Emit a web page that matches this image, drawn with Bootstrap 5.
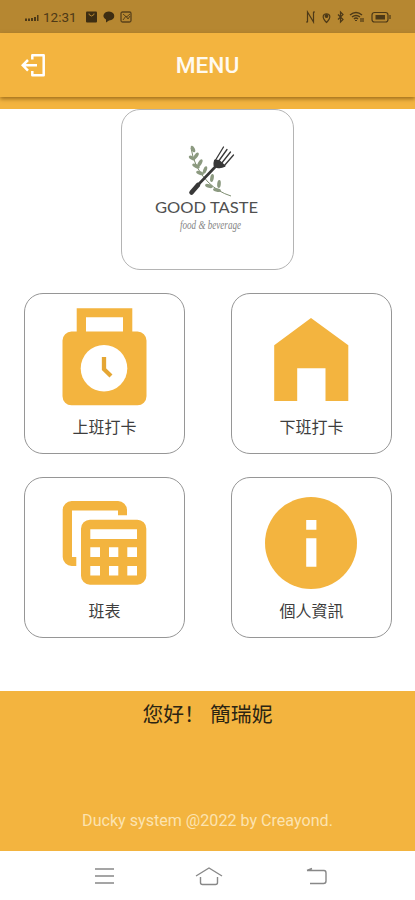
<!DOCTYPE html>
<html lang="zh-Hant">
<head>
<meta charset="utf-8">
<meta name="viewport" content="width=device-width, initial-scale=1">
<title>MENU</title>
<link href="https://cdn.jsdelivr.net/npm/bootstrap@5.3.0/dist/css/bootstrap.min.css" rel="stylesheet">
<style>
:root{--amber:#f3b43f}
body{font-family:Roboto,"Noto Sans CJK SC",sans-serif;height:900px;overflow:hidden;color:#333}
svg{display:block;flex:none}
.status-bar{height:33px;background:#b68731;color:#4d3917;padding:1px 22px 0 24px;font-size:13.5px}
.app-bar{height:64px;background:var(--amber);box-shadow:0 2px 4px rgba(90,55,0,.55);z-index:1}
.app-title{font-size:22.700px;font-weight:500;line-height:66px;color:#fffaf0}
.exit-btn{left:21px;top:20px}
.strip{height:12px;background:var(--amber)}
.tile{border:1px solid #969696;border-radius:19px;background:#fff}
.logo-tile{width:173px;height:161px;border-color:#b4b4b4}
.tiles{padding:0 23px 0 24px;margin-top:23px;row-gap:23px}
.menu-tile{width:161px;height:161px;padding-top:10px;color:#3d3d3d;font-size:16px}
.menu-tile span{line-height:24px;margin-top:2px}
.menu-tile svg{fill:var(--amber);margin-right:2px}
.greeting{height:160px;margin-top:53px;background:var(--amber);color:#2b2413;padding-top:8px}
.hello{font-size:20.8px;line-height:32px;white-space:pre}
.credit{font-size:16.1px;line-height:24px;color:#fce3b0;margin-bottom:18px}
.nav-keys{height:48px;padding:1px 87px 0 93px}
.nav-keys svg{fill:none;stroke:#888;stroke-width:1.4}
</style>
</head>
<body class="d-flex flex-column bg-white">
<div class="status-bar d-flex align-items-center justify-content-between flex-shrink-0">
  <div class="d-flex align-items-center">
    <svg width="15" height="10" viewBox="0 0 15 10" fill="currentColor"><path d="M1 6.500h2v2.500H1zM4 6.500h2v2.500H4zM7 6h2v3H7zM10 5h2v4h-2zM13 3h1.500v6H13z"/></svg>
    <span class="ms-1">12:31</span>
    <svg class="ms-2" width="48" height="12" viewBox="0 0 48 12"><rect x="1" y=".5" width="11" height="11" rx="1" fill="#3d2d12"/><path d="M4 2.5v1q2.500 3 5 0v-1" fill="none" stroke="#b68731"/><path d="M24 .5c7 0 7 9 0 9l-3 2v-3c-5-3-2-8 3-8" fill="#3d2d12"/><rect x="36" y="1" width="10" height="10" rx="1.500" fill="none" stroke="#59411a" stroke-width="1.300"/><path d="M38 3l3.500 3L45 3M38 9l3-4 2 3 2-3" fill="none" stroke="#59411a"/></svg>
  </div>
  <svg width="88" height="14" viewBox="0 0 88 14" fill="none" stroke="#4d3917" stroke-width="1.200"><path d="M2.500 12V2l6 10V2M1 12h2M8 2h2"/><path d="M21.500 12.500C10 .8 33 .8 21.500 12.500z"/><circle cx="21.500" cy="6" r="1.300" fill="#4d3917"/><path d="M33 4.500l5 5-2.500 2.500V2L38 4.500l-5 5"/><path d="M45 5q6-5 12 0M47 7q4-3 8 0M49 9q2-2 4 0" stroke-width="1.500"/><path d="M50 10.500h2M56 8v4M58 8v4"/><rect x="67" y="2.500" width="16" height="9.500" rx="2.500"/><path d="M85 5v4"/><path d="M70.500 5h9.500v4.500H70.500z" fill="#4d3917" stroke="none"/></svg>
</div>
<header class="app-bar position-relative text-center flex-shrink-0">
  <svg class="exit-btn position-absolute" width="25" height="25" viewBox="0 0 25 25" fill="none" stroke="#fff" stroke-width="2.500"><path d="M11.300 6.500V2.300H22.700V22.300H11.300V18" stroke-linejoin="round"/><path d="M16 12.300H2M7 7L1.700 12.300 7 17.600"/></svg>
  <div class="app-title">MENU</div>
</header>
<div class="strip flex-shrink-0"></div>
<main>
  <div class="tile logo-tile mx-auto">
    <svg width="171" height="159" viewBox="0 0 171 159">
      <path d="M69 38Q72 58 86 72Q96 82 109 86" fill="none" stroke="#7d8c70"/>
      <g fill="#8c9a80"><ellipse cx="71" cy="39" rx="1.800" ry="3.500" transform="rotate(-25 71 39)"/><ellipse cx="74" cy="46" rx="1.800" ry="4" transform="rotate(35 74 46)"/><ellipse cx="70" cy="48" rx="1.800" ry="3.500" transform="rotate(-60 70 48)"/><ellipse cx="78" cy="53" rx="1.800" ry="4" transform="rotate(30 78 53)"/><ellipse cx="74" cy="56" rx="1.800" ry="4" transform="rotate(-65 74 56)"/><ellipse cx="83" cy="60" rx="1.800" ry="4" transform="rotate(20 83 60)"/><ellipse cx="78" cy="63" rx="1.800" ry="4" transform="rotate(-70 78 63)"/><ellipse cx="90" cy="68" rx="1.800" ry="4" transform="rotate(10 90 68)"/><ellipse cx="87" cy="76" rx="1.800" ry="4" transform="rotate(-75 87 76)"/><ellipse cx="97" cy="74" rx="1.800" ry="4" transform="rotate(5 97 74)"/><ellipse cx="95" cy="80" rx="1.800" ry="4" transform="rotate(-80 95 80)"/></g>
      <g fill="none" stroke="#383838" stroke-linecap="round"><path d="M69.500 82.500L76 75" stroke-width="4.600"/><path d="M75 76L95 55" stroke-width="2.600"/><path d="M93 50.500Q91 57 95 57Q99 58 102.500 56L97 51z" fill="#383838" stroke-width="2" stroke-linejoin="round"/><path d="M93 51L101.500 37M96 52L105 39.500M99 54L108.500 42M102 56L111.500 45" stroke-width="1.300"/></g>
      <text x="33" y="103" textLength="103" lengthAdjust="spacingAndGlyphs" font-family="Lato, sans-serif" font-size="15.500" fill="#505050">GOOD TASTE</text>
      <text x="58" y="119" textLength="61" lengthAdjust="spacingAndGlyphs" font-family="'Liberation Serif', cursive" font-style="italic" font-size="12.500" fill="#858585">food &amp; beverage</text>
    </svg>
  </div>
  <div class="tiles d-flex flex-wrap justify-content-between">
    <a class="tile menu-tile d-flex flex-column align-items-center text-decoration-none" href="#">
      <svg width="110" height="110" viewBox="0 0 110 110"><path fill-rule="evenodd" d="M27.700 4.300H83.300V27.500H88.500a9 9 0 0 1 9 9V92.300a9 9 0 0 1-9 9H22.500a9 9 0 0 1-9-9V36.500a9 9 0 0 1 9-9h5.200zM37 13.300V27.500H74V13.300z"/><circle cx="55" cy="64.300" r="23.300" fill="#fff"/><path d="M55 53V65.200L62 72" fill="none" stroke="#e5a633" stroke-width="4.300"/></svg>
      <span>上班打卡</span>
    </a>
    <a class="tile menu-tile d-flex flex-column align-items-center text-decoration-none" href="#">
      <svg width="110" height="110" viewBox="0 0 110 110"><path d="M55 14L92.300 41.300V97H69.500V64.300H41.200V97H18.200V41.300z"/></svg>
      <span>下班打卡</span>
    </a>
    <a class="tile menu-tile d-flex flex-column align-items-center text-decoration-none" href="#">
      <svg width="110" height="110" viewBox="0 0 110 110"><path d="M27.300 78H22.700a9 9 0 0 1-9-9V22a9 9 0 0 1 9-9H69a9 9 0 0 1 9 9v5.300H69V22.500H23V69h4.300z"/><path fill-rule="evenodd" d="M41 31.700H88.300a9 9 0 0 1 9 9V87.700a9 9 0 0 1-9 9H41a9 9 0 0 1-9-9V40.700a9 9 0 0 1 9-9zM41.300 41.300V51H88V41.300zM41.300 59.300V69H51V59.300zM60 59.300V69h9.300V59.300zM78.300 59.300V69H88V59.300zM41.300 78v9.600H51V78zM60 78v9.600h9.300V78zM78.300 78v9.600H88V78z"/></svg>
      <span>班表</span>
    </a>
    <a class="tile menu-tile d-flex flex-column align-items-center text-decoration-none" href="#">
      <svg width="110" height="110" viewBox="0 0 110 110"><circle cx="55" cy="55" r="46"/><path fill="#fff" d="M50.200 32h10.200v9.700H50.200zM50.200 50.300h10.200v28.400H50.200z"/></svg>
      <span>個人資訊</span>
    </a>
  </div>
</main>
<section class="greeting d-flex flex-column align-items-center justify-content-between flex-shrink-0">
  <div class="hello" lang="zh-Hans">您好！ 簡瑞妮</div>
  <div class="credit">Ducky system @2022 by Creayond.</div>
</section>
<footer class="nav-keys d-flex align-items-center justify-content-between">
  <svg width="22" height="18" viewBox="0 0 22 18"><path d="M2 2h19M2 9h19M2 16h19"/></svg>
  <svg width="30" height="20" viewBox="0 0 30 20"><path d="M1 10L14 2L27 10M5.500 11V16.500q0 2 2 2h13q2 0 2-2V11"/></svg>
  <svg width="24" height="18" viewBox="0 0 24 18"><path d="M3 3.500H20q2 0 2 2.500v8q0 2.500-2.500 2.500H6M8 1.500L3 3.500"/></svg>
</footer>
<script src="https://cdn.jsdelivr.net/npm/bootstrap@5.3.0/dist/js/bootstrap.bundle.min.js"></script>
</body>
</html>
